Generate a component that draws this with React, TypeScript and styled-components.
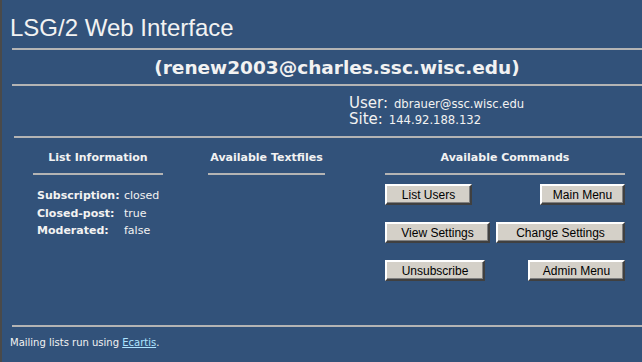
import React, { FC } from "react";
import styled, { createGlobalStyle } from "styled-components";

const GlobalStyle = createGlobalStyle`
  html, body {
    margin: 0;
    padding: 0;
    background: #32527a;
  }
  body {
    font-family: "DejaVu Sans", Verdana, sans-serif;
    color: #f2f2f2;
  }
`;

const StyledPage = styled.div`
  min-height: 362px;
  box-sizing: border-box;
  border-left: 2px solid #4a4a4a;
  padding: 14px 0 0 8px;
  overflow: hidden;
`;

const StyledTitle = styled.div`
  font-family: "Liberation Sans", Arial, sans-serif;
  font-size: 24px;
  line-height: 28px;
  margin: 0 0 6px 0;
`;

const StyledRule = styled.div<{ $inset?: number }>`
  height: 2px;
  background: #b4b4b4;
  margin-left: ${({ $inset }) => $inset ?? 0}px;
`;

const StyledSubtitle = styled.div`
  font-weight: bold;
  font-size: 18.5px;
  line-height: 22px;
  text-align: center;
  padding: 7px 0 5px 22px;
`;

const StyledUserBlock = styled.div`
  display: flex;
  flex-direction: column;
  margin: 9px 0 9px 339px;
`;

const StyledUserLine = styled.div`
  display: flex;
  align-items: baseline;
  gap: 6px;
  height: 16px;
`;

const StyledUserLabel = styled.span`
  display: inline-block;
  font-size: 15px;
  line-height: 16px;
`;

const StyledUserValue = styled.span`
  display: inline-block;
  font-size: 11.6px;
  line-height: 14px;
`;

const StyledColumns = styled.div`
  display: flex;
  align-items: flex-start;
  margin: 13px 0 0 23px;
  height: 174px;
`;

const StyledColumn = styled.div<{ $offset: number; $width: number }>`
  flex: 0 0 ${({ $width }) => $width}px;
  margin-left: ${({ $offset }) => $offset}px;
  display: flex;
  flex-direction: column;
`;

const StyledHeading = styled.div`
  font-weight: bold;
  font-size: 11px;
  line-height: 14px;
  text-align: center;
  padding-bottom: 8px;
  border-bottom: 2px solid #b4b4b4;
  white-space: nowrap;
`;

const StyledInfo = styled.div`
  display: grid;
  grid-template-columns: 87px auto;
  margin: 12px 0 0 4px;
  font-size: 11px;
  line-height: 17.5px;
  white-space: nowrap;
`;

const StyledInfoLabel = styled.span`
  font-weight: bold;
`;

const StyledCommands = styled.div`
  display: flex;
  flex-direction: column;
  gap: 17px;
  margin-top: 9px;
`;

const StyledCommandRow = styled.div`
  display: flex;
  justify-content: space-between;
`;

const StyledButton = styled.button<{ $width: number }>`
  flex: 0 0 ${({ $width }) => $width}px;
  height: 21px;
  padding: 0;
  font-family: "Liberation Sans", Arial, sans-serif;
  font-size: 12px;
  color: #000;
  background: #d4d0c8;
  border: 2px solid;
  border-color: #ffffff #404040 #404040 #ffffff;
  box-shadow: inset -1px -1px 0 #808080;
  white-space: nowrap;
`;

const StyledFooter = styled.div`
  margin: 9px 0 0 0;
  font-size: 10px;
  line-height: 14px;
`;

const StyledLink = styled.a`
  color: #aee4ff;
  text-decoration: underline;
`;

const App: FC = () => (
  <StyledPage>
    <GlobalStyle />
    <StyledTitle>LSG/2 Web Interface</StyledTitle>
    <StyledRule $inset={2} />
    <StyledSubtitle>(renew2003@charles.ssc.wisc.edu)</StyledSubtitle>
    <StyledRule $inset={2} />
    <StyledUserBlock>
      <StyledUserLine>
        <StyledUserLabel>User:</StyledUserLabel>
        <StyledUserValue>dbrauer@ssc.wisc.edu</StyledUserValue>
      </StyledUserLine>
      <StyledUserLine>
        <StyledUserLabel>Site:</StyledUserLabel>
        <StyledUserValue>144.92.188.132</StyledUserValue>
      </StyledUserLine>
    </StyledUserBlock>
    <StyledRule $inset={4} />
    <StyledColumns>
      <StyledColumn $offset={0} $width={130}>
        <StyledHeading>List Information</StyledHeading>
        <StyledInfo>
          <StyledInfoLabel>Subscription:</StyledInfoLabel>
          <span>closed</span>
          <StyledInfoLabel>Closed-post:</StyledInfoLabel>
          <span>true</span>
          <StyledInfoLabel>Moderated:</StyledInfoLabel>
          <span>false</span>
        </StyledInfo>
      </StyledColumn>
      <StyledColumn $offset={45} $width={117}>
        <StyledHeading>Available Textfiles</StyledHeading>
      </StyledColumn>
      <StyledColumn $offset={60} $width={240}>
        <StyledHeading>Available Commands</StyledHeading>
        <StyledCommands>
          <StyledCommandRow>
            <StyledButton $width={87}>List Users</StyledButton>
            <StyledButton $width={85}>Main Menu</StyledButton>
          </StyledCommandRow>
          <StyledCommandRow>
            <StyledButton $width={105}>View Settings</StyledButton>
            <StyledButton $width={129}>Change Settings</StyledButton>
          </StyledCommandRow>
          <StyledCommandRow>
            <StyledButton $width={100}>Unsubscribe</StyledButton>
            <StyledButton $width={97}>Admin Menu</StyledButton>
          </StyledCommandRow>
        </StyledCommands>
      </StyledColumn>
    </StyledColumns>
    <StyledRule $inset={2} />
    <StyledFooter>
      Mailing lists run using <StyledLink href="#">Ecartis</StyledLink>.
    </StyledFooter>
  </StyledPage>
);

export default App;
